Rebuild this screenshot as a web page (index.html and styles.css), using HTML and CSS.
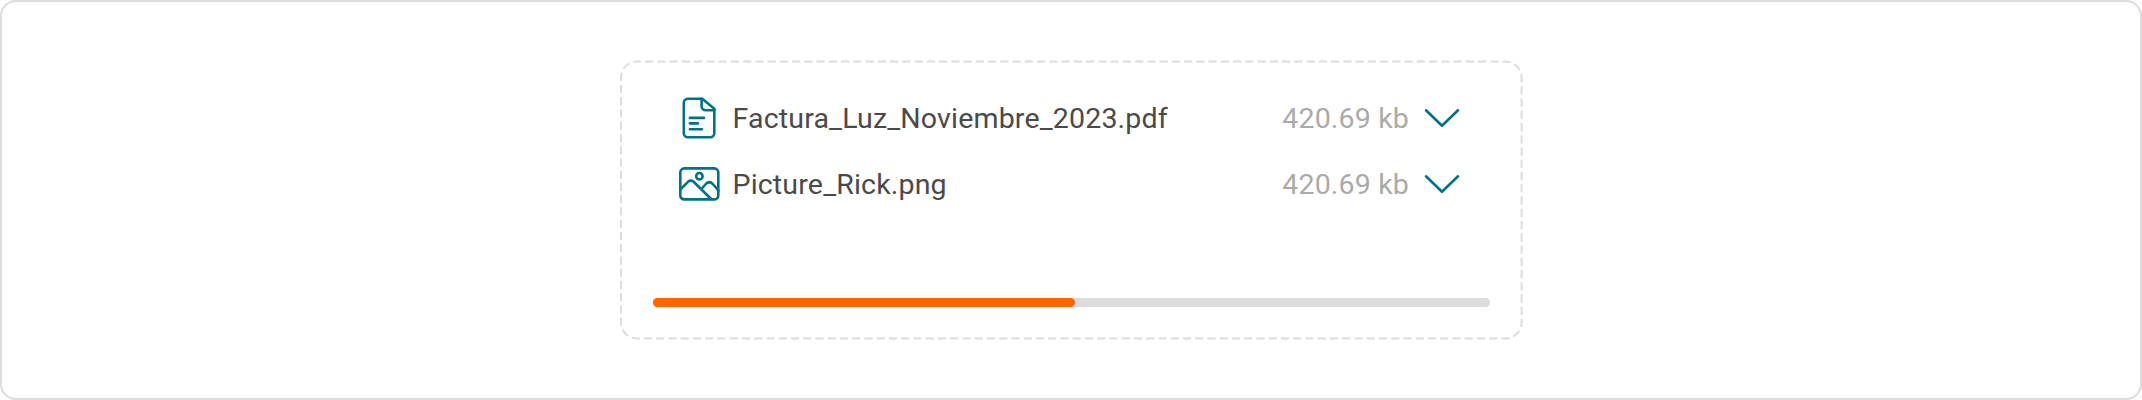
FILE: index.html
```html
<!DOCTYPE html>
<html lang="es">
    <head>
        <meta charset="UTF-8">
        <title>Upload</title>
        <link rel="stylesheet" href="styles.css">
    </head>

    <body>
        <main class="frame">

            <section class="dropzone">
                <!-- dashed outline -->
                <svg class="outline" viewBox="0 0 904 281">
                    <rect x="2" y="2.5" width="900.6" height="277" rx="16"/>
                </svg>

                <ul class="files">
                    <li class="file">
                        <svg class="icon" viewBox="0 0 42 42">
                            <path d="M9.800 1.700h14.500l12 10v24.500a4 4 0 0 1-4 4h-22.500a4 4 0 0 1-4-4v-30.500a4 4 0 0 1 4-4z"/>
                            <path d="M23.600 1.700v7.500a4 4 0 0 0 4 4h8.700"/>
                            <path d="M11.900 20.900h14M11.900 26.400h8M11.900 32.200h12"/>
                        </svg>
                        <span class="name">Factura_Luz_Noviembre_2023.pdf</span>
                        <span class="size">420.69 kb</span>
                        <svg class="chevron" viewBox="0 0 36 20"><path d="M2 2.300l16 15.500 16-15.500"/></svg>
                    </li>
                    <li class="file">
                        <svg class="icon" viewBox="0 0 42 42">
                            <rect x="2.300" y="5.400" width="38" height="31" rx="4"/>
                            <circle cx="21.400" cy="13.200" r="3.200"/>
                            <path d="M2.300 26.500l7.700-7.700q2.800-2.300 5.600 0l17.500 17.200"/>
                            <path d="M24.300 25l3.500-4q3.500-3.500 7 0l5.600 6.500"/>
                        </svg>
                        <span class="name">Picture_Rick.png</span>
                        <span class="size">420.69 kb</span>
                        <svg class="chevron" viewBox="0 0 36 20"><path d="M2 2.300l16 15.500 16-15.500"/></svg>
                    </li>
                </ul>

                <div class="progress">
                    <div class="progress_bar"></div>
                </div>
            </section>

        </main>
    </body>
</html>
```

FILE: styles.css
```css
* {
    box-sizing: border-box;
}

body {
    margin: 0;
    background: #fff;
    font-family: Roboto, "Liberation Sans", sans-serif;
}

.frame {
    display: flex;
    justify-content: center;
    height: 400px;
    padding-top: 57px;
    border: 2px solid #dcdcdc;
    border-radius: 16px;
}

.dropzone {
    position: relative;
    width: 904px;
    height: 281px;
    padding: 26px 33.5px 0 33.5px;
}

.outline {
    position: absolute;
    inset: 0;
    width: 904px;
    height: 281px;
    fill: none;
    stroke: #dcdcdc;
    stroke-width: 2;
    stroke-dasharray: 8.17 4.08;
    stroke-dashoffset: 4.2;
}

.files {
    margin: 0;
    padding: 0 29.5px 0 25.5px;
    list-style: none;
}

.file {
    display: flex;
    align-items: center;
    height: 66px;
    font-size: 28.56px;
    letter-spacing: 0.16px;
}

.icon {
    width: 42px;
    height: 42px;
    margin-right: 12.5px;
    fill: none;
    stroke: #007286;
    stroke-width: 2.6;
    stroke-linejoin: round;
    stroke-linecap: round;
}

.name {
    flex: 1;
    color: #4a4a4a;
}

.size {
    margin-right: 15px;
    color: #aaa;
}

.chevron {
    width: 36px;
    height: 20px;
    fill: none;
    stroke: #007286;
    stroke-width: 2.6;
    stroke-linecap: round;
    stroke-linejoin: round;
}

.progress {
    height: 8.5px;
    margin-top: 81px;
    border-radius: 5px;
    background: #dcdcdc;
}

.progress_bar {
    width: 50.5%;
    height: 100%;
    border-radius: 5px;
    background: #ff6400;
}
```
